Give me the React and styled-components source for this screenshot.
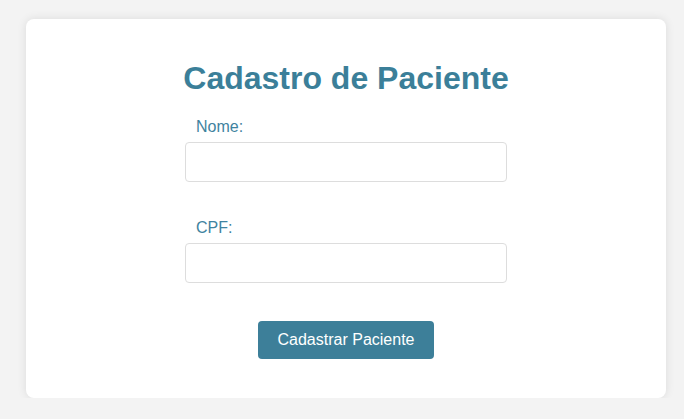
import React from "react";
import styled, { createGlobalStyle } from "styled-components";

const GlobalStyle = createGlobalStyle`
  body {
    margin: 0;
    background: #f3f3f3;
    font-family: "Liberation Sans", Arial, sans-serif;
  }
`;

const Card = styled.div`
  width: 600px;
  margin: 19px 0 0 26px;
  padding: 20px 20px 39px;
  background: #fff;
  border-radius: 8px;
  box-shadow: 0 0 10px rgba(0, 0, 0, 0.1);
  display: flex;
  flex-direction: column;
  align-items: center;
`;

const Title = styled.h1`
  margin: 21px 0 21px;
  font-size: 32px;
  font-weight: bold;
  color: #3b7f99;
  line-height: 37px;
`;

const Form = styled.form`
  width: 322px;
  display: flex;
  flex-direction: column;
`;

const Field = styled.div`
  display: flex;
  flex-direction: column;
  gap: 6px;
  margin-bottom: ${(p) => p.$gap}px;
`;

const Label = styled.label`
  margin-left: 11px;
  font-size: 16px;
  line-height: 18px;
  color: #3f83a0;
`;

const Input = styled.input`
  box-sizing: border-box;
  width: 100%;
  height: 40px;
  padding: 10px;
  border: 1px solid #ddd;
  border-radius: 4px;
  font-size: 16px;
  font-family: inherit;
  outline: none;
`;

const Button = styled.button`
  align-self: center;
  height: 38px;
  padding: 0 20px;
  border: none;
  border-radius: 4px;
  background: #3d7f99;
  color: #fff;
  font-size: 16px;
  font-family: inherit;
  cursor: pointer;
`;

const App = () => (
  <>
    <GlobalStyle />
    <Card>
      <Title>Cadastro de Paciente</Title>
      <Form onSubmit={(e) => e.preventDefault()}>
        <Field $gap={37}>
          <Label htmlFor="nome">Nome:</Label>
          <Input id="nome" type="text" />
        </Field>
        <Field $gap={38}>
          <Label htmlFor="cpf">CPF:</Label>
          <Input id="cpf" type="text" />
        </Field>
        <Button type="submit">Cadastrar Paciente</Button>
      </Form>
    </Card>
  </>
);

export default App;
